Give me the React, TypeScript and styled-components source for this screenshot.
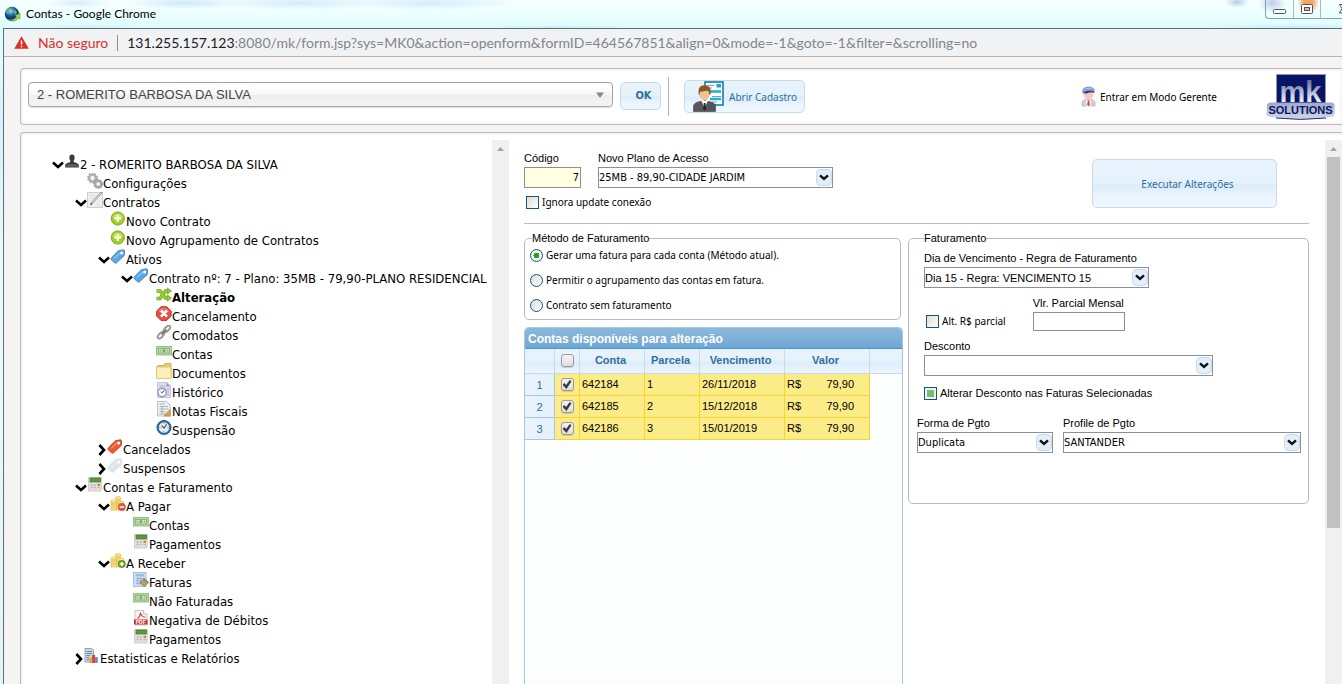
import React, { useId, useState } from 'react';
import styled, { createGlobalStyle, css } from 'styled-components';

const tahoma = `Tahoma, 'DejaVu Sans Condensed', 'DejaVu Sans', sans-serif`;
const tahomaSmall = `Tahoma, 'Noto Sans', sans-serif`;
const arial = `'Liberation Sans', Arial, sans-serif`;
const segoe = `'Segoe UI', Lato, sans-serif`;

const line = '#bfb6c2';
const link = '#2e6e9e';

const GlobalStyle = createGlobalStyle`
  *, *::before, *::after { box-sizing: border-box; }
  html, body { margin: 0; height: 100%; overflow: hidden; }
  body { font-family: ${arial}; font-size: 11px; color: #000; }
  button, input, select { font: inherit; color: inherit; margin: 0; }
`;

/* ---------- window frame ---------- */

const Window = styled.div`
  display: flex;
  flex-direction: column;
  height: 100vh;
  overflow: hidden;
  background: linear-gradient(#f6ffff 0, #f0ffff 10px, #dcfdfe 28px, #e4fbff 60px, #d4f0fb 120px, #eef9fe 260px, #e4f4fb 100%);
`;

const TitleBar = styled.header`
  position: relative;
  flex: none;
  display: flex;
  align-items: center;
  gap: 5px;
  height: 28px;
  padding-left: 4px;
  background:
    radial-gradient(ellipse 34px 5px at 78px 3px, #d8edfa, transparent),
    radial-gradient(ellipse 60px 6px at 186px 3px, #cfe8f8, transparent),
    radial-gradient(ellipse 80px 7px at 300px 3px, #d4eafa, transparent),
    radial-gradient(ellipse 90px 7px at 430px 3px, #d4ecfb, transparent),
    radial-gradient(ellipse 12px 6px at 1237px 2px, #b4d0ea, transparent),
    radial-gradient(ellipse 14px 10px at 1272px 3px, #b9cfe8, transparent),
    radial-gradient(ellipse 60px 4px at 90px 28px, #cdeffa, transparent),
    radial-gradient(ellipse 90px 3px at 560px 28px, #c4ecf8, transparent),
    radial-gradient(ellipse 90px 3px at 1290px 27px, #c8ecfb, transparent);
`;

const TitleText = styled.h1`
  margin: 0;
  flex: 1;
  font: 400 12px/16px ${segoe};
`;

const WindowControls = styled.div`
  align-self: flex-start;
  display: flex;
  height: 19px;
  border: 1px solid #8d9fa6;
  border-width: 0 0 1px 1px;
  border-radius: 0 0 0 4px;
`;

const WindowButton = styled.button<{ $w: number; $glow?: boolean }>`
  display: flex;
  align-items: center;
  justify-content: center;
  width: ${p => p.$w}px;
  padding: 0;
  border: 0;
  border-right: 1px solid #a9b9c0;
  overflow: hidden;
  background: ${p => (p.$glow ? 'radial-gradient(ellipse 11px 12px at 55% 2px, #f0a56c 40%, transparent)' : 'transparent')};
  &:last-child { border-right: 0; justify-content: flex-end; }
`;

const Client = styled.div`
  flex: 1;
  min-height: 0;
  display: flex;
  flex-direction: column;
  margin-left: 3px;
  border-left: 1px solid #5f6e74;
  border-top: 1px solid #5f6e74;
  background: #f5f4f3;
`;

const AddressBar = styled.div`
  flex: none;
  display: flex;
  align-items: center;
  height: 28px;
  padding-left: 10px;
  background: #f1f2f4;
  border-bottom: 1px solid #b4b3b5;
  font: 14px/20px ${segoe};
  white-space: nowrap;
`;

const Insecure = styled.span`
  display: flex;
  align-items: center;
  gap: 9px;
  color: #d93025;
  padding-right: 9px;
  border-right: 1px solid #8c9095;
  margin-right: 9px;
  line-height: 16px;
`;

const Url = styled.span`
  color: #80868b;
  b { font-weight: 400; color: #202124; }
`;

/* ---------- panels ---------- */

const panel = css`
  margin-left: 16px;
  background: #fff;
  border: 1px solid ${line};
  border-right: 0;
`;

const Toolbar = styled.section`
  ${panel}
  flex: none;
  display: flex;
  align-items: center;
  height: 57px;
  margin-top: 11px;
  padding: 0 7px;
  border-radius: 4px 0 0 4px;
  box-shadow: inset 0 0 0 2px #f8f7f8;
`;

const ClientPicker = styled.select`
  appearance: none;
  min-width: 0;
  width: 100%;
  height: 25px;
  padding: 0 8px;
  border: 1px solid #a5a5a5;
  border-radius: 4px;
  background: linear-gradient(#fff 20%, #f6f6f6 50%, #eee 52%, #f4f4f4 100%);
  box-shadow: 0 1px 1px #ddd;
  font: 13px/16px ${arial};
  color: #444;
`;

const PickerWrap = styled.div`
  flex: 0 1 585px;
  min-width: 0;
  display: grid;
  align-items: center;
  margin-bottom: 4px;
  > * { grid-area: 1 / 1; }
  > svg { justify-self: end; margin-right: 9px; pointer-events: none; }
`;

const blueButton = css`
  border: 1px solid #c5dbec;
  border-radius: 5px;
  background: linear-gradient(#e8f3fc 0%, #e6f2fb 48%, #dcecfa 52%, #ecf5fe 80%, #eef6fe 100%);
  color: ${link};
  cursor: pointer;
`;

const OkButton = styled.button`
  ${blueButton}
  width: 41px;
  height: 28px;
  margin: 0 0 2px 7px;
  padding: 0 0 0 6px;
  font: bold 11px/14px ${tahoma};
`;

const Divider = styled.span`
  width: 1px;
  height: 39px;
  margin: 0 15px 0 7px;
  background: #b9adbb;
`;

const RegisterButton = styled.button`
  ${blueButton}
  display: flex;
  align-items: center;
  gap: 5px;
  width: 121px;
  height: 33px;
  padding: 0 0 0 8px;
  font: 10px/14px ${tahomaSmall};
  white-space: nowrap;
`;

const ManagerLink = styled.a`
  display: flex;
  align-items: center;
  gap: 4px;
  margin-left: auto;
  margin-right: 49px;
  color: #000;
  text-decoration: none;
  font: 10px/14px ${tahomaSmall};
`;

const Workspace = styled.section`
  ${panel}
  flex: 1;
  min-height: 0;
  display: grid;
  grid-template-columns: minmax(0, 471fr) 17px minmax(0, 816fr) 17px;
  margin-top: 7px;
  padding-top: 7px;
  border-bottom: 0;
  border-radius: 4px 0 0 0;
  box-shadow: inset 2px 2px 0 #f8f7f8;
`;

const ScrollTrack = styled.div`
  display: flex;
  flex-direction: column;
  align-items: center;
  background: #f0f0f0;
  > svg { flex: none; margin: 6px 0; }
`;

const ScrollThumb = styled.div`
  width: 13px;
  height: 371px;
  background: #c1c1c1;
`;

/* ---------- tree ---------- */

const Tree = styled.nav`
  padding: 14px 0 0 31px;
  overflow: hidden;
  font: 13px/17px ${tahoma};
`;

const Branch = styled.ul`
  list-style: none;
  margin: 0;
  padding: 0;
  & & { padding-left: 23px; }
`;

const Node = styled.a<{ $current?: boolean }>`
  display: flex;
  align-items: flex-end;
  height: 19px;
  color: #000;
  text-decoration: none;
  white-space: nowrap;
  font-weight: ${p => (p.$current ? 'bold' : 'normal')};
  > svg { flex: none; align-self: flex-start; }
`;

const ToggleSlot = styled.span<{ $w: number }>`
  flex: none;
  display: flex;
  align-items: center;
  width: ${p => p.$w}px;
  height: 17px;
`;

/* ---------- form ---------- */

const Form = styled.form`
  display: flex;
  flex-direction: column;
  min-height: 0;
  padding: 0 16px 0 15px;
`;

const TopRow = styled.div`
  display: flex;
  justify-content: space-between;
  align-items: flex-start;
  height: 84px;
  padding: 11px 32px 0 0;
  border-bottom: 1px solid #bdb9bd;
`;

const Stack = styled.div<{ $gap: number }>`
  display: flex;
  flex-direction: column;
  gap: ${p => p.$gap}px;
`;

const Inline = styled.div<{ $gap: number; $inset?: number }>`
  display: flex;
  align-items: flex-end;
  gap: ${p => p.$gap}px;
  padding-left: ${p => p.$inset ?? 0}px;
`;

const FieldBox = styled.div<{ $w: number }>`
  display: flex;
  flex-direction: column;
  gap: 2px;
  width: ${p => p.$w}px;
  max-width: 100%;
  > label { line-height: 14px; white-space: nowrap; }
`;

const TextInput = styled.input<{ $tint?: boolean }>`
  width: 100%;
  height: ${p => (p.$tint ? 21 : 19)}px;
  padding: 0 1px;
  border: 1px solid #8f8f8f;
  border-radius: 0;
  background: ${p => (p.$tint ? '#ffffe1' : '#fff')};
  text-align: right;
  font: 11px/14px ${tahoma};
`;

const SelectWrap = styled.div`
  display: grid;
  align-items: center;
  > * { grid-area: 1 / 1; }
  > svg { justify-self: end; margin-right: 1px; pointer-events: none; }
`;

const Select = styled.select<{ $wide?: boolean }>`
  appearance: none;
  width: 100%;
  height: 21px;
  padding: 0 20px 0 0;
  border: 1px solid #8f8f8f;
  border-radius: 0;
  background: #fff;
  font: 11px/14px ${p => (p.$wide ? arial : tahoma)};
`;

const Choice = styled.label<{ $arial?: boolean }>`
  display: flex;
  align-items: center;
  gap: 3px;
  height: 14px;
  white-space: nowrap;
  font: ${p => (p.$arial ? `11px/14px ${arial}` : `10px/14px ${tahomaSmall}`)};
`;

const CheckInput = styled.input`
  appearance: none;
  flex: none;
  width: 13px;
  height: 13px;
  border: 1px solid #1c5180;
  background: linear-gradient(135deg, #dcdcd7, #fff);
  &:checked { background: #73bf6e; box-shadow: inset 0 0 0 2px #eef3ee; }
`;

const RadioInput = styled.input`
  appearance: none;
  flex: none;
  width: 13px;
  height: 13px;
  border: 1px solid #1c5180;
  border-radius: 50%;
  background: linear-gradient(135deg, #dcdcd7, #fff);
  &:checked { background: radial-gradient(circle, #21a121 0 2px, #55bb55 3px, #f4f4f1 3px); }
`;

const ExecuteButton = styled.button`
  ${blueButton}
  width: 185px;
  height: 49px;
  margin-top: 8px;
  padding: 0 0 0 6px;
  font: 10px/14px ${tahomaSmall};
`;

const Columns = styled.div`
  flex: 1;
  min-height: 0;
  display: grid;
  grid-template-columns: minmax(0, 379fr) minmax(0, 401fr);
  gap: 5px;
  padding-top: 7px;
`;

const Left = styled.div`
  display: flex;
  flex-direction: column;
  gap: 7px;
  min-height: 0;
  > fieldset { margin-right: 2px; }
`;

const Group = styled.fieldset<{ $h: number; $indent: number }>`
  min-width: 0;
  height: ${p => p.$h}px;
  margin: 0;
  padding: 0 7px 0 ${p => p.$indent}px;
  border: 1px solid ${line};
  border-radius: 5px;
  > legend { padding: 0; line-height: 14px; }
`;

const Radios = styled.div`
  display: flex;
  flex-direction: column;
  gap: 11px;
  margin-left: -2px;
  padding-top: 3px;
`;

const Billing = styled.div`
  display: flex;
  flex-direction: column;
  align-items: flex-start;
  padding-top: 6px;
`;

const PartialRow = styled.div`
  display: flex;
  align-items: flex-end;
  gap: 27px;
  padding: 8px 0 0 2px;
  > label { margin-bottom: 3px; }
`;

const Spaced = styled.div<{ $top: number; $out?: boolean }>`
  max-width: ${p => (p.$out ? 'calc(100% + 7px)' : '100%')};
  margin-top: ${p => p.$top}px;
  margin-left: ${p => (p.$out ? -7 : 0)}px;
`;

/* ---------- grid ---------- */

const GridPanel = styled.div`
  flex: 1;
  min-height: 0;
  border: 1px solid #a6c9e2;
  border-bottom: 0;
  border-radius: 5px 5px 0 0;
  background: #fcfdfd;
  overflow: hidden;
`;

const Table = styled.table`
  width: 100%;
  table-layout: fixed;
  border-collapse: separate;
  border-spacing: 0;
  font: 11px/14px ${arial};
  caption {
    height: 21px;
    padding-left: 3px;
    text-align: left;
    font: bold 12px/22px ${arial};
    color: #fff;
    background: linear-gradient(#8ab8da, #7fb1d8 50%, #6ea6d3 100%);
    border-bottom: 1px solid #4297d7;
  }
`;

const HeadCell = styled.th`
  height: 25px;
  padding: 0 3px 2px 0;
  border-right: 1px solid #c5dbec;
  border-bottom: 1px solid #c5dbec;
  background: linear-gradient(#e8f3fc 0%, #e6f2fb 48%, #dcecfa 52%, #ecf5fe 100%);
  color: ${link};
  &:nth-child(2) { padding-right: 0; }
  &:last-child { border-right: 0; }
`;

const RowHead = styled.th`
  height: 22px;
  padding: 0;
  border-right: 1px solid #a6c9e2;
  border-bottom: 1px solid #a6c9e2;
  background: linear-gradient(90deg, #e8f3fc, #e4f0fb);
  color: ${link};
  font-weight: 400;
`;

const Cell = styled.td`
  height: 22px;
  padding: 0 2px 2px;
  border-right: 1px solid #fad42e;
  border-bottom: 1px solid #fad42e;
  background: #fbec88;
`;

const TickCell = styled(Cell)`
  padding: 0;
`;

const Money = styled.div`
  display: flex;
  justify-content: space-between;
  padding-right: 13px;
`;

const RowTick = styled.input`
  appearance: none;
  display: grid;
  place-items: center;
  width: 13px;
  height: 13px;
  margin: 0 auto;
  border: 1px solid #9a9a9a;
  border-radius: 3px;
  background: linear-gradient(#f4f4f4, #dedede);
  box-shadow: 0 1px 1px rgba(0, 0, 0, 0.15);
  &:checked::before {
    content: '';
    width: 9px;
    height: 9px;
    background: #3c3c3c;
    clip-path: polygon(0 52%, 20% 34%, 40% 56%, 80% 0, 100% 14%, 44% 100%);
  }
`;

/* ---------- small drawings ---------- */

const Svg = ({ children, w = 16, h = 16, vb }: { children: React.ReactNode; w?: number; h?: number; vb?: string }) => (
  <svg width={w} height={h} viewBox={vb ?? `0 0 ${w} ${h}`} aria-hidden="true">{children}</svg>
);

const ToggleOpen = () => (
  <Svg w={12} h={8}><path d="M1 1.6 L6 6 L11 1.6" fill="none" stroke="#000" strokeWidth="2.6" /></Svg>
);
const ToggleClosed = () => (
  <Svg w={8} h={12}><path d="M1.4 1 L6 6 L1.4 11" fill="none" stroke="#000" strokeWidth="2.6" /></Svg>
);

const ComboArrow = () => (
  <Svg w={16} h={17}>
    <rect x="0.5" y="0.5" width="15" height="16" rx="4" fill="#e2effb" stroke="#c0d9ee" />
    <path d="M4 6.4 L8 10 L12 6.4" fill="none" stroke="#111" strokeWidth="2.4" />
  </Svg>
);

const ScrollUp = () => <Svg w={9} h={5}><path d="M1 5 L4.5 1 L8 5 Z" fill="#a3a3a3" /></Svg>;

const Globe = () => (
  <Svg w={17} h={17}>
    <defs>
      <radialGradient id="globe" cx="0.4" cy="0.3"><stop offset="0" stopColor="#b4dcff" /><stop offset="0.5" stopColor="#2f74d0" /><stop offset="1" stopColor="#0b2f6b" /></radialGradient>
    </defs>
    <circle cx="8" cy="8" r="7.2" fill="url(#globe)" />
    <path d="M2.500 5 Q4 2 7 2 Q7 5 5 6 Q4 8 2.500 7.500 Z M9.500 4 Q12 4 13 6.500 Q12 9 10.500 8.500 Z" fill="#6cc24a" />
    <path d="M2.500 12.500 Q8 15.500 12.500 11 L11 9.500 L16 7 L16 13 L14.500 12.200 Q9.500 17.500 2.500 12.500 Z" fill="#9ad850" stroke="#3b8a1c" strokeWidth="0.5" />
  </Svg>
);

const Warning = () => (
  <Svg w={15} h={13}>
    <path d="M7.500 0.300 L14.800 12.700 H0.200 Z" fill="#d93025" />
    <path d="M7.500 4.500 V8.500 M7.500 9.700 V11.200" stroke="#fff" strokeWidth="1.500" />
  </Svg>
);

const UserIcon = () => (
  <Svg>
    <path d="M8 0.500 C10.300 0.500 10.900 2.300 10.600 4.300 C10.400 6 9.600 6.700 9.600 7.500 C9.600 8.600 14.500 8.800 14.800 11 V13.500 H1.200 V11 C1.500 8.800 6.400 8.600 6.400 7.500 C6.400 6.700 5.600 6 5.400 4.300 C5.100 2.300 5.700 0.500 8 0.500 Z" fill="#3b3b3b" />
    <path d="M2 13 V11.400 C3 10 6 10 8 10 S13 10 14 11.400 V13 Z" fill="#5a5a5a" />
  </Svg>
);

const GearsIcon = () => (
  <Svg>
    <circle cx="5.500" cy="5" r="3.300" fill="none" stroke="#b4b4b4" strokeWidth="2.600" />
    <circle cx="5.500" cy="5" r="4.700" fill="none" stroke="#999" strokeWidth="1.400" strokeDasharray="1.500 1.450" />
    <circle cx="11.200" cy="11" r="3" fill="none" stroke="#acacac" strokeWidth="2.400" />
    <circle cx="11.200" cy="11" r="4.200" fill="none" stroke="#8e8e8e" strokeWidth="1.300" strokeDasharray="1.400 1.240" />
  </Svg>
);

const ContractIcon = () => (
  <Svg>
    <rect x="0.500" y="0.500" width="15" height="15" fill="#eeeeee" stroke="#cfcfcf" />
    <path d="M2.500 3.500 H8 M2.500 6 H7 M9 13 H13" stroke="#dcdcdc" />
    <path d="M15.500 0.500 L6 11 L3.500 13 L4.500 10 L13.500 0.500 Z" fill="#d6d6d6" stroke="#8d8d8d" strokeWidth="0.700" />
    <path d="M3.300 13.300 L4.200 10.800 L5.700 12 Z" fill="#555" />
  </Svg>
);

const PlusIcon = () => (
  <Svg>
    <circle cx="7.800" cy="7.500" r="6.600" fill="#9ccf2c" stroke="#7fae22" />
    <path d="M2.500 6.500 A5.500 5.500 0 0 1 13 6.500 Q8 8.500 2.500 6.500 Z" fill="#bfe268" />
    <path d="M7.800 4 V11 M4.300 7.500 H11.300" stroke="#fff8cf" strokeWidth="2.400" />
  </Svg>
);

const TagIcon = ({ a, b }: { a: string; b: string }) => (
  <Svg>
    <path d="M13.500 0.800 L14.500 1.500 L14.200 6.500 L6.500 13.800 Q5.500 14.500 4.500 13.700 L1.200 10.700 Q0.500 9.800 1.300 8.900 L8.500 1.800 Z" fill={a} stroke={b} />
    <path d="M3 9.800 L9.500 3.500 L12 3 L5.500 9.300 Z" fill="#fff" opacity="0.300" />
    <circle cx="11.700" cy="3.900" r="1.500" fill="#fff" />
  </Svg>
);

const ShuffleIcon = () => (
  <Svg>
    <path d="M0.500 4 H4 L9.500 11 H12" fill="none" stroke="#6fa51c" strokeWidth="3.400" />
    <path d="M0.500 11.500 H4 L9.500 4 H12" fill="none" stroke="#6fa51c" strokeWidth="3.400" />
    <path d="M1 4 H4 L9.500 11 H12 M1 11.500 H4 L9.500 4 H12" fill="none" stroke="#96cf32" strokeWidth="2" />
    <path d="M11.300 0.800 L15.700 4 L11.300 7.200 Z M11.300 7.800 L15.700 11 L11.300 14.300 Z" fill="#8cc92c" stroke="#6fa51c" strokeWidth="0.500" />
  </Svg>
);

const CancelIcon = () => (
  <Svg>
    <path d="M5 0.700 H10.600 L15.200 5 V10 L10.600 14.500 H5 L0.600 10 V5 Z" fill="#e2503f" stroke="#c23c2e" />
    <path d="M5.500 1.800 H10.200 L14 5.500 Q8 8 1.800 5.500 Z" fill="#f08b7c" opacity="0.600" />
    <path d="M4.900 4.500 L11 10.600 M11 4.500 L4.900 10.600" stroke="#fff" strokeWidth="2.500" />
  </Svg>
);

const LinkIcon = () => (
  <Svg>
    <g fill="none" stroke="#9a9a9a" strokeWidth="2">
      <ellipse cx="11" cy="3.900" rx="4" ry="2" transform="rotate(-45 11 3.900)" />
      <ellipse cx="4.800" cy="10.300" rx="4" ry="2" transform="rotate(-45 4.800 10.300)" />
    </g>
    <path d="M5.500 9.500 L10.500 4.600" stroke="#6f6f6f" strokeWidth="1.500" />
  </Svg>
);

const CashIcon = () => (
  <Svg>
    <rect x="0.500" y="2.500" width="15" height="8.500" fill="#b4d6a2" stroke="#98c08a" />
    <rect x="2.500" y="4.500" width="11" height="4.500" fill="#cfe5c2" stroke="#7faa70" strokeWidth="0.800" />
    <circle cx="8" cy="6.700" r="1.700" fill="#7faa70" />
    <path d="M4.300 5.700 V7.700 M11.700 5.700 V7.700" stroke="#7faa70" />
  </Svg>
);

const FolderIcon = () => (
  <Svg>
    <path d="M1 15 V3 L3 2.500 H8 L9 0.500 H15 V15 Z" fill="#e6cd73" stroke="#cdb25a" />
    <rect x="0.500" y="4" width="14.500" height="11.500" rx="0.500" fill="#fbf0ba" stroke="#e0c873" />
  </Svg>
);

const HistoryIcon = () => (
  <Svg>
    <path d="M1.500 0.500 H11 L14.500 4 V15.500 H1.500 Z" fill="#dedcf0" stroke="#c6c3e2" />
    <path d="M10.500 0.500 L14.500 4.500 H10.500 Z" fill="#9c97c9" />
    <path d="M3.500 4 H9 M11 7.500 H13 M11 10 H13 M11 12.500 H13" stroke="#b3aed6" />
    <circle cx="6" cy="10.500" r="4.200" fill="#f4f8fc" stroke="#8d9cb0" strokeWidth="1.400" />
    <path d="M6 10.800 L8 8.500 M6 10.800 L5 9.800" stroke="#333" />
  </Svg>
);

const InvoiceIcon = () => (
  <Svg>
    <path d="M1.500 0.500 H10.500 L14 4 V15 H1.500 Z" fill="#eef2f2" stroke="#b5c2c2" />
    <path d="M3.500 3 H9 M3.500 5.500 H12 M3.500 8 H12 M3.500 10.500 H9 M3.500 13 H8 M6 5 V13" stroke="#a3b5b3" />
    <path d="M8 15.500 V12.500 H10.500 V10.500 H12.500 V8.500 H14.800 V15.500 Z" fill="#c99c5d" />
  </Svg>
);

const ClockIcon = () => (
  <Svg>
    <circle cx="8" cy="7.500" r="6.400" fill="#e6edf2" stroke="#2c6a9e" strokeWidth="2.300" />
    <path d="M8 2.800 V4 M8 11 V12.200 M3.300 7.500 H4.500 M11.500 7.500 H12.700" stroke="#777" strokeWidth="0.800" />
    <path d="M5.600 5.600 L8 8 L10.600 4.300" fill="none" stroke="#555" strokeWidth="1.200" />
  </Svg>
);

const RegisterCalcIcon = () => (
  <Svg>
    <path d="M1.500 0.500 H14.500 L14 14 H1.500 Z" fill="#e3e1dc" stroke="#cfccc6" />
    <rect x="3" y="1" width="10.500" height="4" fill="#5b9a3c" stroke="#437a2a" strokeWidth="0.700" />
    <path d="M3.500 8 H5.500 M6.700 8 H8.700 M3.500 10.500 H5.500 M6.700 10.500 H8.700" stroke="#b9b7b2" strokeWidth="1.400" />
    <path d="M10.500 7.800 H13" stroke="#e2683a" strokeWidth="1.800" />
    <path d="M10.500 10.500 H12.800" stroke="#b9b7b2" strokeWidth="1.400" />
  </Svg>
);

const CoinsIcon = ({ plus }: { plus?: boolean }) => (
  <Svg>
    <g fill="#f9dc78" stroke="#e3bb50" strokeWidth="0.700">
      <path d="M1 5.500 H6.500 V14 H1 Z" /><ellipse cx="3.800" cy="5.300" rx="2.800" ry="1.400" fill="#fdeb9c" />
      <path d="M5.500 1.800 H10.500 V14 H6.500 V5 Z" /><ellipse cx="8" cy="1.900" rx="2.600" ry="1.300" fill="#fdeb9c" />
      <path d="M9 6.800 H14 V11 H9 Z" /><ellipse cx="11.500" cy="6.600" rx="2.600" ry="1.300" fill="#fdeb9c" />
      <path d="M1 8.200 H6.500 M1 10.800 H6.500 M6.500 4.700 H10.500 M6.500 7.500 H9 M6.500 10 H9" fill="none" />
    </g>
    <circle cx="11.800" cy="11" r="3.600" fill={plus ? '#6aa92b' : '#e2574a'} stroke={plus ? '#4c8518' : '#c23c2e'} strokeWidth="0.700" />
    <path d={plus ? 'M11.800 9 V13 M9.800 11 H13.800' : 'M9.500 11 H14.100'} stroke="#fff" strokeWidth="1.500" />
  </Svg>
);

const BillsIcon = () => (
  <Svg>
    <rect x="0.500" y="0.500" width="12.500" height="14" fill="#cfe1f4" stroke="#a3bfe0" />
    <rect x="2.500" y="2" width="8.500" height="2.500" fill="#9cbbe0" />
    <path d="M3 6.500 H11 M3 9 H11 M3 11.500 H8 M4.700 5.500 V13 M7.500 5.500 V13" stroke="#8fb0d8" />
    <path d="M7 10 L11.500 6.500 L15.800 10.500 L11 14.500 Z" fill="#8c9a6b" stroke="#6c7a4e" strokeWidth="0.700" />
    <path d="M9 8.300 L13.400 12.500 M8 9.200 L12 13.500" stroke="#d99a52" strokeWidth="1.200" />
  </Svg>
);

const PdfIcon = () => (
  <Svg>
    <path d="M2 0.500 H10.500 L14 4 V15 H2 Z" fill="#f4f4f4" stroke="#c6c6c6" />
    <path d="M10.500 0.500 V4 H14" fill="#fff" stroke="#c6c6c6" />
    <path d="M4.500 8.500 Q7.500 6.500 7.500 2.500 Q8 6.500 12 7.300" fill="none" stroke="#d8413b" strokeWidth="1.100" />
    <rect x="1" y="9.500" width="13.500" height="5" fill="#cf2b28" />
    <text x="7.700" y="13.800" textAnchor="middle" fontFamily="Liberation Sans" fontWeight="bold" fontSize="5" fill="#fff">PDF</text>
  </Svg>
);

const ReportsIcon = () => (
  <Svg>
    <path d="M1 0.500 H7.500 L9.500 2 V14 H1 Z" fill="#c8d6e3" stroke="#8fa6ba" />
    <path d="M2.500 3.500 H8 M2.500 5.500 H8 M2.500 7.500 H6 M2.500 9.500 H5 M2.500 11.500 H5" stroke="#6f8ba5" />
    <rect x="5.500" y="9.500" width="2.700" height="5.500" fill="#eda32e" />
    <rect x="8.200" y="7" width="2.900" height="8" fill="#db4437" />
    <rect x="11.100" y="9" width="2.700" height="6" fill="#5d8fd1" />
  </Svg>
);

const CadastroIcon = () => (
  <Svg w={31} h={31}>
    <rect x="12" y="1" width="18" height="23" fill="#fff" stroke="#0f7fb0" strokeWidth="1.600" />
    <path d="M14.500 4.500 H21 M14.500 7 H19 M19 15.500 H28 M19 21 H24" stroke="#8a9aa3" strokeWidth="1.200" />
    <rect x="23.500" y="3" width="4.500" height="3.500" fill="#12a8cf" />
    <path d="M17 10.500 H28 M17 18 H28" stroke="#12b4dc" strokeWidth="2.400" />
    <path d="M0.500 30.500 V25 Q1 21.500 7 20.500 H16 Q22 21.500 22.500 25 V30.500 Z" fill="#55555a" stroke="#3a3a3e" strokeWidth="0.600" />
    <path d="M8.500 20 L11.500 27 L14.800 20 Z" fill="#fff" />
    <path d="M10.800 22 H12.400 L13 28 L11.600 30 L10.200 28 Z" fill="#26262a" />
    <path d="M6 10 Q6 5 11.700 5 T17.200 10 Q17 18.500 11.700 19.800 Q6.500 18.500 6 12 Z" fill="#ecc690" />
    <path d="M5.500 13 Q4.500 4 11.500 4.200 Q18.500 4 17.800 13 L16.500 14 Q16.500 10.500 14.500 9.500 Q9 11 7 10.500 L6.500 14 Z" fill="#8f5420" />
  </Svg>
);

const ManagerIcon = () => (
  <Svg w={15} h={21}>
    <path d="M1 20 V16.500 Q2 13 7.500 13 T14 16.500 V20 Z" fill="#cdced8" stroke="#a9abba" strokeWidth="0.600" />
    <path d="M5 13 L7.500 16 L10 13 L9.500 20 H5.500 Z" fill="#fff" />
    <path d="M6.800 14.500 H8.200 L8.800 18.500 L7.500 20.200 L6.200 18.500 Z" fill="#d8423c" />
    <ellipse cx="7.500" cy="8" rx="5" ry="5.300" fill="#f4cdb4" />
    <path d="M1 6.800 Q1 0.600 7.500 0.600 T14 6.800 Q10 5.200 5.500 7 L1.800 7.500 Z" fill="#8d99cf" />
    <path d="M2.200 6.900 Q6 3.600 13 5.600 V6.800 Q10 5.600 5.500 7.400 Z" fill="#27337f" />
    <path d="M3 3.500 Q7.500 0 12 3.200 Q7.500 2.200 3 3.500 Z" fill="#bcc5ec" />
  </Svg>
);

const Logo = () => (
  <svg width="69" height="46" viewBox="0 0 69 46" role="img" aria-label="MK Solutions">
    <defs>
      <linearGradient id="mk" x2="0" y2="1"><stop offset="0.200" stopColor="#6f79a6" /><stop offset="0.650" stopColor="#ced4e6" /><stop offset="0.850" stopColor="#f4f6fb" /></linearGradient>
      <linearGradient id="band" x2="0" y2="1"><stop offset="0" stopColor="#9da9cd" /><stop offset="1" stopColor="#d3d9ea" /></linearGradient>
    </defs>
    <rect x="10.500" y="0.500" width="49" height="31" fill="#0a1464" stroke="#8c94b4" />
    <text x="34.500" y="27.500" textAnchor="middle" fontFamily="Liberation Sans" fontWeight="bold" fontSize="29" fill="url(#mk)">mk</text>
    <path d="M1 30 L4 28.500 H66 L68.500 30 V41 Q68 43 60 43.500 Q34 47.500 9 43.500 Q1 43 0.500 41 Z" fill="url(#band)" />
    <path d="M10 44 Q34 46.800 60 44" fill="none" stroke="#1f2c6f" />
    <text x="34.500" y="39.500" textAnchor="middle" fontFamily="Liberation Sans" fontWeight="bold" fontSize="11" fill="#0a1464">SOLUTIONS</text>
  </svg>
);

/* ---------- data ---------- */

type Item = { label: string; icon: React.ReactNode; children?: Item[]; closed?: boolean; current?: boolean };

const blueTag = <TagIcon a="#5ba7e0" b="#3d87c4" />;

const tree: Item[] = [
  {
    label: '2 - ROMERITO BARBOSA DA SILVA', icon: <UserIcon />, children: [
      { label: 'Configurações', icon: <GearsIcon /> },
      {
        label: 'Contratos', icon: <ContractIcon />, children: [
          { label: 'Novo Contrato', icon: <PlusIcon /> },
          { label: 'Novo Agrupamento de Contratos', icon: <PlusIcon /> },
          {
            label: 'Ativos', icon: blueTag, children: [
              {
                label: 'Contrato nº: 7 - Plano: 35MB - 79,90-PLANO RESIDENCIAL', icon: blueTag, children: [
                  { label: 'Alteração', icon: <ShuffleIcon />, current: true },
                  { label: 'Cancelamento', icon: <CancelIcon /> },
                  { label: 'Comodatos', icon: <LinkIcon /> },
                  { label: 'Contas', icon: <CashIcon /> },
                  { label: 'Documentos', icon: <FolderIcon /> },
                  { label: 'Histórico', icon: <HistoryIcon /> },
                  { label: 'Notas Fiscais', icon: <InvoiceIcon /> },
                  { label: 'Suspensão', icon: <ClockIcon /> },
                ],
              },
            ],
          },
          { label: 'Cancelados', icon: <TagIcon a="#ee5a30" b="#c9421d" />, closed: true },
          { label: 'Suspensos', icon: <TagIcon a="#dde6ec" b="#d3dde4" />, closed: true },
        ],
      },
      {
        label: 'Contas e Faturamento', icon: <RegisterCalcIcon />, children: [
          {
            label: 'A Pagar', icon: <CoinsIcon />, children: [
              { label: 'Contas', icon: <CashIcon /> },
              { label: 'Pagamentos', icon: <RegisterCalcIcon /> },
            ],
          },
          {
            label: 'A Receber', icon: <CoinsIcon plus />, children: [
              { label: 'Faturas', icon: <BillsIcon /> },
              { label: 'Não Faturadas', icon: <CashIcon /> },
              { label: 'Negativa de Débitos', icon: <PdfIcon /> },
              { label: 'Pagamentos', icon: <RegisterCalcIcon /> },
            ],
          },
        ],
      },
      { label: 'Estatisticas e Relatórios', icon: <ReportsIcon />, closed: true },
    ],
  },
];

const accounts = [
  { conta: '642184', parcela: '1', vencimento: '26/11/2018', valor: '79,90' },
  { conta: '642185', parcela: '2', vencimento: '15/12/2018', valor: '79,90' },
  { conta: '642186', parcela: '3', vencimento: '15/01/2019', valor: '79,90' },
];

const methods = [
  'Gerar uma fatura para cada conta (Método atual).',
  'Permitir o agrupamento das contas em fatura.',
  'Contrato sem faturamento',
];

/* ---------- composed parts ---------- */

const TreeLevel = ({ items }: { items: Item[] }) => (
  <Branch>
    {items.map(item => (
      <li key={item.label}>
        <Node href="#" $current={item.current} aria-current={item.current ? 'page' : undefined}>
          <ToggleSlot $w={item.closed ? 9 : 12}>
            {item.closed ? <ToggleClosed /> : item.children ? <ToggleOpen /> : null}
          </ToggleSlot>
          {item.icon}
          {item.label}
        </Node>
        {item.children && <TreeLevel items={item.children} />}
      </li>
    ))}
  </Branch>
);

const SelectField = ({ label, value, w, wide }: { label: string; value: string; w: number; wide?: boolean }) => {
  const id = useId();
  return (
    <FieldBox $w={w}>
      <label htmlFor={id}>{label}</label>
      <SelectWrap>
        <Select id={id} $wide={wide}><option>{value}</option></Select>
        <ComboArrow />
      </SelectWrap>
    </FieldBox>
  );
};

const InputField = ({ label, value, w, tint }: { label: string; value: string; w: number; tint?: boolean }) => {
  const id = useId();
  return (
    <FieldBox $w={w}>
      <label htmlFor={id}>{label}</label>
      <TextInput id={id} $tint={tint} defaultValue={value} />
    </FieldBox>
  );
};

const AccountsTable = () => {
  const [picked, setPicked] = useState<string[]>(accounts.map(a => a.conta));
  const toggle = (c: string) => setPicked(p => (p.includes(c) ? p.filter(x => x !== c) : [...p, c]));
  return (
    <Table>
      <caption>Contas disponíveis para alteração</caption>
      <colgroup>
        {[30, 25, 65, 55, 85, 85].map((w, i) => <col key={i} width={w} />)}
        <col />
      </colgroup>
      <thead>
        <tr>
          <HeadCell />
          <HeadCell><RowTick type="checkbox" aria-label="Selecionar todas" /></HeadCell>
          <HeadCell>Conta</HeadCell>
          <HeadCell>Parcela</HeadCell>
          <HeadCell>Vencimento</HeadCell>
          <HeadCell>Valor</HeadCell>
          <HeadCell />
        </tr>
      </thead>
      <tbody>
        {accounts.map((a, i) => (
          <tr key={a.conta}>
            <RowHead scope="row">{i + 1}</RowHead>
            <TickCell>
              <RowTick type="checkbox" aria-label={`Conta ${a.conta}`} checked={picked.includes(a.conta)} onChange={() => toggle(a.conta)} />
            </TickCell>
            <Cell>{a.conta}</Cell>
            <Cell>{a.parcela}</Cell>
            <Cell>{a.vencimento}</Cell>
            <Cell><Money><span>R$</span><span>{a.valor}</span></Money></Cell>
          </tr>
        ))}
      </tbody>
    </Table>
  );
};

export default function App() {
  return (
    <>
      <GlobalStyle />
      <Window>
        <TitleBar>
          <Globe />
          <TitleText>Contas - Google Chrome</TitleText>
          <WindowControls>
            <WindowButton $w={28} aria-label="Minimizar">
              <Svg w={13} h={12}><rect x="0.500" y="6.500" width="12" height="4" rx="1" fill="#fff" stroke="#4b555c" /></Svg>
            </WindowButton>
            <WindowButton $w={27} $glow aria-label="Restaurar">
              <Svg w={12} h={10}><rect x="0.500" y="0.500" width="11" height="9" rx="1" fill="#fff" stroke="#4b555c" /><rect x="3.500" y="3.500" width="5" height="3" fill="#f0b48c" stroke="#4b555c" /></Svg>
            </WindowButton>
            <WindowButton $w={21} aria-label="Fechar">
              <Svg w={3} h={10}><path d="M0.500 0.500 H3 M0.500 0.500 L3 4.500 L0.500 9 H3" fill="none" stroke="#4b555c" /></Svg>
            </WindowButton>
          </WindowControls>
        </TitleBar>

        <Client>
          <AddressBar>
            <Insecure><Warning />Não seguro</Insecure>
            <Url>
              <b>131.255.157.123</b>:8080/mk/form.jsp?sys=MK0&amp;action=openform&amp;formID=464567851&amp;align=0&amp;mode=-1&amp;goto=-1&amp;filter=&amp;scrolling=no
            </Url>
          </AddressBar>

          <Toolbar>
            <PickerWrap>
              <ClientPicker aria-label="Cliente"><option>2 - ROMERITO BARBOSA DA SILVA</option></ClientPicker>
              <Svg w={8} h={6}><path d="M0 0.500 H8 L4 6 Z" fill="#888" /></Svg>
            </PickerWrap>
            <OkButton type="button">OK</OkButton>
            <Divider />
            <RegisterButton type="button"><CadastroIcon />Abrir Cadastro</RegisterButton>
            <ManagerLink href="#"><ManagerIcon />Entrar em Modo Gerente</ManagerLink>
            <Logo />
          </Toolbar>

          <Workspace>
            <Tree aria-label="Contratos e contas"><TreeLevel items={tree} /></Tree>
            <ScrollTrack><ScrollUp /></ScrollTrack>
            <Form onSubmit={e => e.preventDefault()}>
              <TopRow>
                <Stack $gap={7}>
                  <Inline $gap={17}>
                    <InputField label="Código" value="7" w={57} tint />
                    <SelectField label="Novo Plano de Acesso" value="25MB - 89,90-CIDADE JARDIM" w={235} />
                  </Inline>
                  <Inline $gap={0} $inset={2}>
                    <Choice><CheckInput type="checkbox" />Ignora update conexão</Choice>
                  </Inline>
                </Stack>
                <ExecuteButton type="submit">Executar Alterações</ExecuteButton>
              </TopRow>

              <Columns>
                <Left>
                  <Group $h={89} $indent={7}>
                    <legend>Método de Faturamento</legend>
                    <Radios>
                      {methods.map((m, i) => (
                        <Choice key={m}><RadioInput type="radio" name="metodo" defaultChecked={i === 0} />{m}</Choice>
                      ))}
                    </Radios>
                  </Group>
                  <GridPanel><AccountsTable /></GridPanel>
                </Left>

                <Group $h={273} $indent={15}>
                  <legend>Faturamento</legend>
                  <Billing>
                    <SelectField label="Dia de Vencimento - Regra de Faturamento" value="Dia 15 - Regra: VENCIMENTO 15" w={225} wide />
                    <PartialRow>
                      <Choice><CheckInput type="checkbox" />Alt. R$ parcial</Choice>
                      <InputField label="Vlr. Parcial Mensal" value="" w={92} />
                    </PartialRow>
                    <Spaced $top={8}><SelectField label="Desconto" value="" w={289} /></Spaced>
                    <Spaced $top={10}>
                      <Choice $arial><CheckInput type="checkbox" defaultChecked />Alterar Desconto nas Faturas Selecionadas</Choice>
                    </Spaced>
                    <Spaced $top={16} $out>
                      <Inline $gap={10}>
                        <SelectField label="Forma de Pgto" value="Duplicata" w={136} />
                        <SelectField label="Profile de Pgto" value="SANTANDER" w={238} />
                      </Inline>
                    </Spaced>
                  </Billing>
                </Group>
              </Columns>
            </Form>
            <ScrollTrack><ScrollUp /><ScrollThumb /></ScrollTrack>
          </Workspace>
        </Client>
      </Window>
    </>
  );
}
